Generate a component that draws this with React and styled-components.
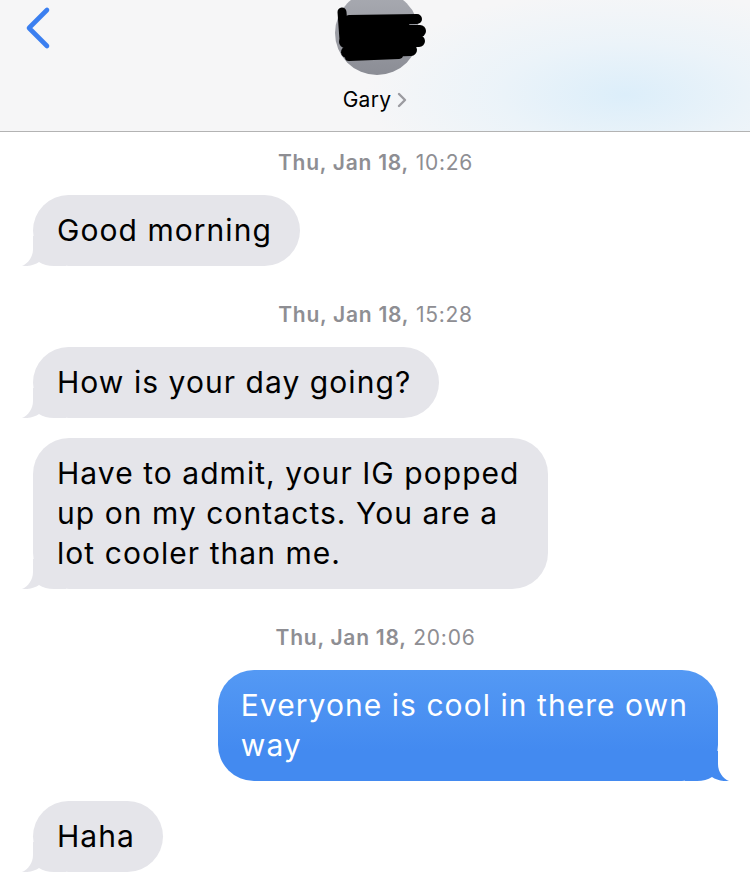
import React from "react";
import styled, { createGlobalStyle, css } from "styled-components";

const Global = createGlobalStyle`
  html, body { margin: 0; padding: 0; background: #ffffff; }
  body { font-family: Inter, "Liberation Sans", Arial, sans-serif; -webkit-font-smoothing: antialiased; }
  * { box-sizing: border-box; }
`;

const Page = styled.div`
  width: 750px;
  height: 878px;
  overflow: hidden;
  display: flex;
  flex-direction: column;
  background: #fff;
`;

const Header = styled.header`
  height: 132px;
  flex: none;
  display: grid;
  grid-template-columns: 1fr auto 1fr;
  border-bottom: 1px solid #b3b3b3;
  background:
    radial-gradient(ellipse 260px 105px at 625px 95px, rgba(220, 238, 250, 1), rgba(230, 242, 250, 0.65) 50%, rgba(246, 246, 247, 0) 100%),
    #f6f6f7;
`;

const BackButton = styled.div`
  padding: 6px 0 0 22px;
`;

const Contact = styled.div`
  display: flex;
  flex-direction: column;
  align-items: center;
  margin-top: -9px;
`;

const Avatar = styled.div`
  position: relative;
  width: 84px;
  height: 84px;
  border-radius: 50%;
  background: linear-gradient(180deg, #a9abb2 0%, #8b8d95 100%);
  margin-left: 4px;
`;

const Scribble = styled.svg`
  position: absolute;
  left: 0;
  top: 0;
  overflow: visible;
`;

const Name = styled.div`
  margin-top: 12px;
  display: flex;
  align-items: center;
  gap: 6px;
  font-size: 21px;
  line-height: 26px;
  color: #000;
  letter-spacing: 0.3px;
`;

const Thread = styled.main`
  display: flex;
  flex-direction: column;
  padding: 0 32px 0 33px;
`;

const Stamp = styled.div`
  align-self: center;
  font-size: 21px;
  line-height: 24px;
  letter-spacing: 0.75px;
  color: #8e8e93;
  margin: ${(p) => (p.$first ? "19px" : "17px")} 0 20px;
  b { font-weight: 600; }
`;

const gray = "#e5e5ea";
const blueBottom = "#438af0";

const Bubble = styled.div`
  position: relative;
  isolation: isolate;
  font-size: 30px;
  line-height: 40px;
  letter-spacing: 1.05px;
  padding: 15px 28px 16px 24px;
  border-radius: 36px;
  margin-bottom: ${(p) => (p.$last ? "0" : "20px")};
  ${(p) =>
    p.$mine
      ? css`
          align-self: flex-end;
          color: #fff;
          padding-left: 23px;
          padding-right: 30px;
          background: linear-gradient(180deg, #5499f4 0%, ${blueBottom} calc(100% - 30px), ${blueBottom} 100%);
        `
      : css`
          align-self: flex-start;
          color: #000;
          background: ${gray};
        `}
`;

const Tail = styled.svg`
  position: absolute;
  z-index: -1;
  bottom: 0;
  ${(p) => (p.$mine ? "right: -11px; transform: scaleX(-1);" : "left: -11px;")}
`;

function BubbleTail({ mine }) {
  return (
    <Tail $mine={mine} width="44" height="30" viewBox="0 0 44 30">
      <path
        d="M11 0 L11 13 C11 21 6 27.5 0 30 C7 30.6 13 28.8 17 26 C21 28.6 26 30 32 30 L44 30 L44 0 Z"
        fill={mine ? blueBottom : gray}
      />
    </Tail>
  );
}

function Message({ mine, last, children }) {
  return (
    <Bubble $mine={mine} $last={last}>
      {children}
      <BubbleTail mine={mine} />
    </Bubble>
  );
}

function Chevron() {
  return (
    <svg width="34" height="46" viewBox="0 0 34 46">
      <polyline
        points="25,4 7,22 25,40"
        fill="none"
        stroke="#3b7ff0"
        strokeWidth="4.6"
        strokeLinecap="round"
        strokeLinejoin="round"
      />
    </svg>
  );
}

function SmallChevron() {
  return (
    <svg width="10" height="16" viewBox="0 0 10 16">
      <polyline
        points="2,2 8,8 2,14"
        fill="none"
        stroke="#9b9ba0"
        strokeWidth="2.4"
        strokeLinecap="round"
        strokeLinejoin="round"
      />
    </svg>
  );
}

function Redaction() {
  return (
    <Scribble width="84" height="84" viewBox="0 0 84 84">
      <g stroke="#000" strokeLinecap="round" strokeLinejoin="round" fill="none">
        <path d="M7 21 L9 49" strokeWidth="9" />
        <path d="M14 29 L82 28" strokeWidth="10" />
        <path d="M10 40 L85 40" strokeWidth="12" />
        <path d="M10 51 L84 50" strokeWidth="12" />
        <path d="M12 61 L76 59" strokeWidth="12" />
        <path d="M14 66 L64 64" strokeWidth="8" />
        <path d="M16 36 L70 36 M16 46 L70 46 M16 56 L70 56" strokeWidth="10" />
      </g>
    </Scribble>
  );
}

export default function App() {
  return (
    <>
      <Global />
      <Page>
        <Header>
          <BackButton>
            <Chevron />
          </BackButton>
          <Contact>
            <Avatar>
              <Redaction />
            </Avatar>
            <Name>
              Gary
              <SmallChevron />
            </Name>
          </Contact>
          <div />
        </Header>
        <Thread>
          <Stamp $first>
            <b>Thu, Jan 18,</b> 10:26
          </Stamp>
          <Message>Good morning</Message>
          <Stamp>
            <b>Thu, Jan 18,</b> 15:28
          </Stamp>
          <Message>How is your day going?</Message>
          <Message>
            Have to admit, your IG popped
            <br />
            up on my contacts. You are a
            <br />
            lot cooler than me.
          </Message>
          <Stamp>
            <b>Thu, Jan 18,</b> 20:06
          </Stamp>
          <Message mine>
            Everyone is cool in there own
            <br />
            way
          </Message>
          <Message last>Haha</Message>
        </Thread>
      </Page>
    </>
  );
}
